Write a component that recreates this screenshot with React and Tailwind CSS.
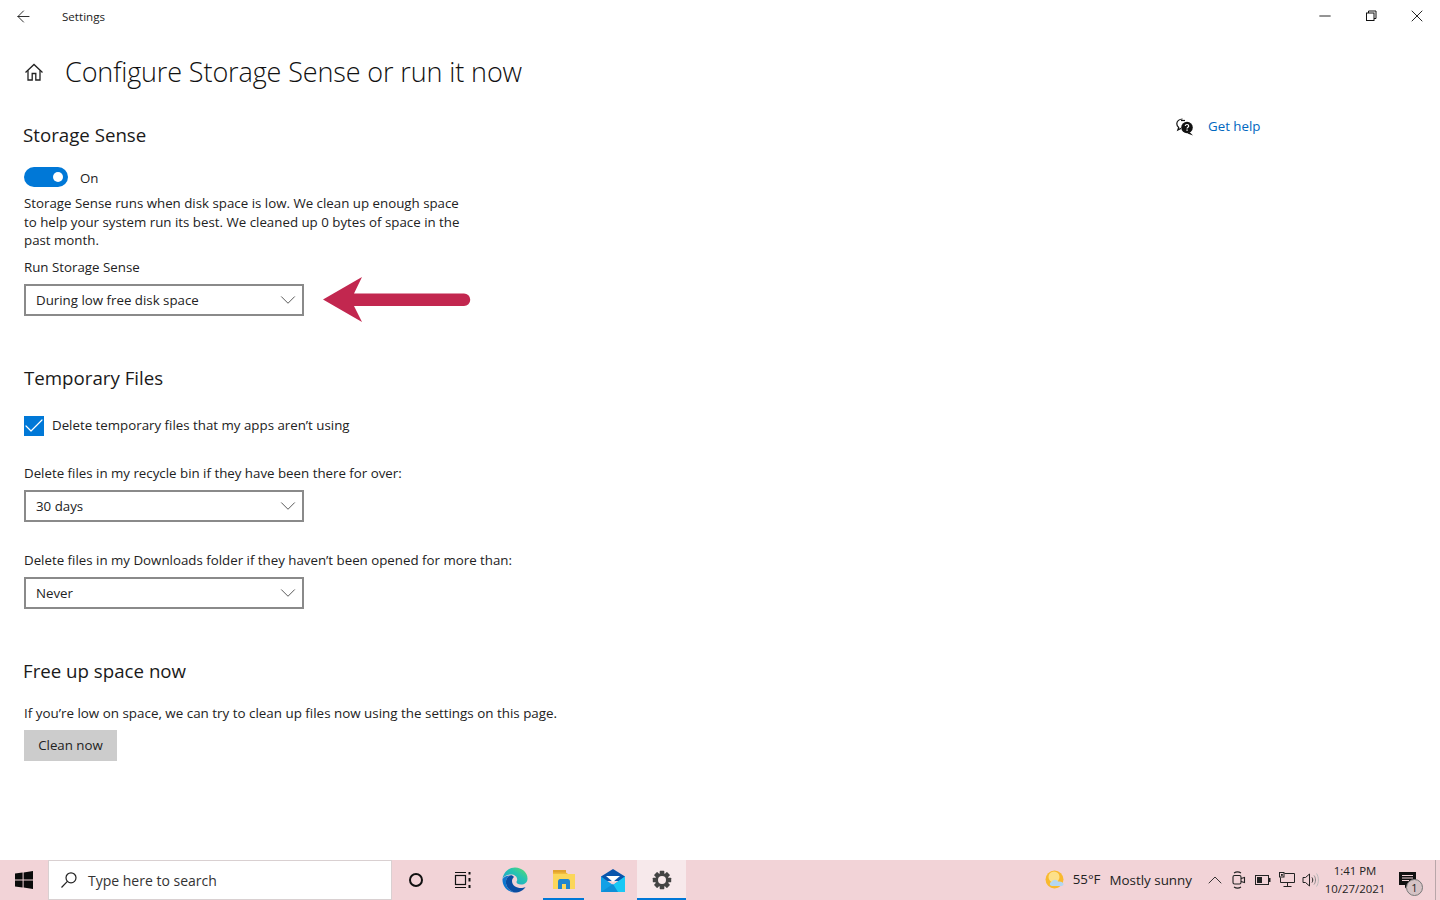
import React from 'react';
import { ArrowLeft, ChevronDown, ChevronUp, Check, Minus, X } from 'lucide-react';

const font = 'font-["Open_Sans","Noto_Sans",sans-serif]';
const body = 'text-[13.3px] leading-[18px] text-[#222]';

function Select({ value }) {
  return (
    <div className={`flex h-8 w-[280px] items-center justify-between border-2 border-[#8a8a8a] bg-white pl-[10px] pr-px ${body}`}>
      <span>{value}</span>
      <ChevronDown className="h-[26px] w-[26px] text-[#555]" strokeWidth={0.9} />
    </div>
  );
}

function SectionTitle({ children, className }) {
  return <h2 className={`text-[18.7px] leading-7 text-[#1a1a1a] ${className}`}>{children}</h2>;
}

function RestoreIcon() {
  return (
    <svg width="12" height="12" viewBox="0 0 12 12" fill="none" stroke="#111" strokeWidth="1">
      <rect x="1.5" y="3" width="7.5" height="7.5" />
      <path d="M3.5 3V1h7.5v7.5H9" />
    </svg>
  );
}

function HomeIcon() {
  return (
    <svg width="20" height="20" viewBox="0 0 20 20" fill="none" stroke="#222" strokeWidth="1.3">
      <path d="M1.5 10.5 10 2.5l8.5 8" />
      <path d="M4 8.5V18h4.2v-6.5h3.6V18H16V8.5" />
    </svg>
  );
}

function HelpIcon() {
  return (
    <svg width="18" height="18" viewBox="0 0 18 18">
      <path d="M6.5 1C3.3 1 .8 3.1.8 5.800c0 1.5.7 2.8 1.900 3.7L1.800 12l3.100-1.600" fill="none" stroke="#111" strokeWidth="1.2" />
      <path d="M5 2.5h4" stroke="#111" strokeWidth="1.2" />
      <circle cx="11" cy="9.5" r="5.8" fill="#111" />
      <path d="M13.5 14l3.5 3.5-5.5-2z" fill="#111" />
      <path d="M9.2 8c.2-1 .9-1.5 1.8-1.5 1 0 1.7.6 1.7 1.4 0 1.3-1.7 1.3-1.7 2.7" fill="none" stroke="#fff" strokeWidth="1.2" />
      <rect x="10.4" y="11.5" width="1.3" height="1.3" fill="#fff" />
    </svg>
  );
}

function RedArrow() {
  return (
    <svg width="148" height="46" viewBox="0 0 148 46" className="-my-[7px] ml-[19px] shrink-0">
      <path d="M0 22.5 39 0 31 16.5H141a6 6 0 0 1 0 12.5H31l8 16z" fill="#c2274f" />
    </svg>
  );
}

function WindowsLogo() {
  return (
    <svg width="18" height="18" viewBox="0 0 18 18" fill="#0a0a0a">
      <path d="M0 2.6 7.6 1.5v7H0zM8.6 1.4 18 0v8.5H8.6zM0 9.5h7.6v7L0 15.4zM8.6 9.5H18V18l-9.4-1.4z" />
    </svg>
  );
}

function SearchIcon() {
  return (
    <svg width="18" height="18" viewBox="0 0 18 18" fill="none" stroke="#222" strokeWidth="1.2">
      <circle cx="11" cy="6.8" r="5" />
      <path d="M7.4 10.4 1.5 16.5" />
    </svg>
  );
}

function TaskViewIcon() {
  return (
    <svg width="18" height="18" viewBox="0 0 18 18" fill="none" stroke="#111" strokeWidth="1.2">
      <path d="M1 1.5h11M1 16.5h11" />
      <rect x="1.5" y="4.5" width="10" height="9" />
      <path d="M15.5 1v2.5M15.5 7v3.5M15.5 14v3" strokeWidth="2" />
    </svg>
  );
}

function EdgeIcon() {
  return (
    <svg width="26" height="26" viewBox="0 0 26 26">
      <defs>
        <linearGradient id="edgeTop" x1="0" y1="1" x2="1" y2="0">
          <stop offset="0" stopColor="#1c9ad6" />
          <stop offset="0.6" stopColor="#27c4b0" />
          <stop offset="1" stopColor="#5fdc6a" />
        </linearGradient>
      </defs>
      <path d="M.5 12C1.5 5 7 .5 13 .5c7 0 12.5 5 12.5 11 0 4-3 6-6.5 6-3 0-4.5-1.3-4.5-2.5 0-.8.7-1 .7-2.5 0-3-3-5-6-5-4 0-7.5 2-8.7 4.5z" fill="url(#edgeTop)" />
      <path d="M.5 12c1.7-2.5 4.7-3.5 7.7-3.5-3 1.5-4.7 4.5-4.2 8 .5 4 4 7.5 8.5 9C5.500 25 .5 19.5.5 13z" fill="#0d76cf" />
      <path d="M8.2 8.5C5 10 3.5 13 4 16.5c.5 4 4 7.5 8.5 9 5 0 9-2 11-5.500-1.500.8-3 1-4.500 1-4.500 0-9-2.500-9-7 0-2 .9-3 2-4-1.200-1.300-2.500-2-3.800-1.500z" fill="#0a4da2" />
    </svg>
  );
}

function ExplorerIcon() {
  return (
    <svg width="22" height="20" viewBox="0 0 22 20">
      <path d="M0 0h13v4H0z" fill="#e2a32e" />
      <path d="M0 4h22v15H0z" fill="#fbd65a" />
      <path d="M0 2.5h13L15 4H0z" fill="#f1bb3a" />
      <path d="M5 19V11.5C5 10 6 9 7 9h8c1 0 2 1 2 2.5V19h-4v-5H9v5z" fill="#1f85cf" />
    </svg>
  );
}

function MailIcon() {
  return (
    <svg width="24" height="23" viewBox="0 0 24 23">
      <path d="M12 0 24 7.5V12H0V7.5z" fill="#0a55ac" />
      <path d="M5 7h14l-7 6z" fill="#fff" />
      <path d="M0 7.5 12 16 24 7.5V23H0z" fill="#12a0e6" />
      <path d="M24 7.5V23H14L12 16z" fill="#19c8f5" />
      <path d="M0 23 12 15l5 8z" fill="#0d8fd8" />
    </svg>
  );
}

function GearIcon() {
  return (
    <svg width="20" height="20" viewBox="0 0 20 20">
      <g fill="#444">
        <rect x="7.7" y="0.8" width="4.6" height="18.4" rx="0.6" />
        <rect x="7.7" y="0.8" width="4.6" height="18.4" rx="0.6" transform="rotate(45 10 10)" />
        <rect x="7.7" y="0.8" width="4.6" height="18.4" rx="0.6" transform="rotate(90 10 10)" />
        <rect x="7.7" y="0.8" width="4.6" height="18.4" rx="0.6" transform="rotate(135 10 10)" />
      </g>
      <circle cx="10" cy="10" r="6.8" fill="#444" />
      <circle cx="10" cy="10" r="4" fill="#f7e9eb" />
    </svg>
  );
}

function WeatherIcon() {
  return (
    <svg width="20" height="20" viewBox="0 0 20 20">
      <circle cx="9.5" cy="9.5" r="9" fill="#f9b92e" />
      <circle cx="9" cy="7" r="5.5" fill="#fde08a" />
      <path d="M7 16c-2.5 0-3-3.5-.5-4 .5-2.5 5-3.5 6.5-.5 3-.5 5.5 1 5.5 2.5 0 1.5-1 2-2.5 2z" fill="#b4d7f2" />
    </svg>
  );
}

function MeetIcon() {
  return (
    <svg width="14" height="18" viewBox="0 0 14 18" fill="none" stroke="#222" strokeWidth="1.1">
      <rect x="1" y="4.5" width="8" height="8.5" rx="1.5" />
      <path d="M9 7.5l3.5-1v5l-3.5-1" />
      <path d="M2 2c2-1.3 5-1.3 7 0M2 16c2 1.3 5 1.3 7 0" />
    </svg>
  );
}

function BatteryIcon() {
  return (
    <svg width="16" height="10" viewBox="0 0 16 10" fill="none">
      <rect x="0.5" y="0.5" width="13" height="9" stroke="#222" />
      <rect x="2" y="2" width="5" height="6" fill="#222" />
      <rect x="14" y="3" width="1.5" height="4" fill="#222" />
    </svg>
  );
}

function NetworkIcon() {
  return (
    <svg width="16" height="16" viewBox="0 0 16 16" fill="none" stroke="#222" strokeWidth="1">
      <path d="M5.5 1.5h10v9H1.5V5.5M8.5 10.5v3.5M4.5 14.5h8" />
      <rect x="0.5" y="0.5" width="4.5" height="4.5" />
      <rect x="2" y="2" width="1.8" height="1.8" fill="#222" stroke="none" />
    </svg>
  );
}

function VolumeIcon() {
  return (
    <svg width="18" height="16" viewBox="0 0 18 16" fill="none" stroke="#222" strokeWidth="1">
      <path d="M1 5.5h2.5L7.5 2v12l-4-3.5H1z" />
      <path d="M10 5.5c1 1.5 1 3.5 0 5" />
      <path d="M12 3.5c2 2.5 2 6.5 0 9" stroke="#888" />
      <path d="M14.5 1.5c2.5 3.5 2.5 9.5 0 13" stroke="#bbb" />
    </svg>
  );
}

function NotificationIcon() {
  return (
    <div className="relative ml-[6px] h-[30px] w-[32px]">
      <svg width="17" height="17" viewBox="0 0 17 17" className="absolute left-[6px] top-[7px]">
        <path d="M0 0h17v13H9l-3 3.5V13H0z" fill="#111" />
        <path d="M3 3.5h11M3 6h11M3 8.5h7" stroke="#f2d3d7" strokeWidth="1" />
      </svg>
      <span className="absolute left-[13px] top-[14px] flex h-[17px] w-[17px] items-center justify-center rounded-full border border-[#777] bg-[#d5c3c5] text-[11px] leading-none text-[#222]">1</span>
    </div>
  );
}

function TaskbarSlot({ children, active, running, className }) {
  return (
    <div className={`relative flex h-10 items-center justify-center ${active ? 'bg-[#f7e9eb]' : ''} ${className}`}>
      {children}
      {(active || running) && <span className={`absolute bottom-0 h-[2px] bg-[#0078d7] ${active ? 'inset-x-0' : 'inset-x-[4px]'}`} />}
    </div>
  );
}

export default function App() {
  return (
    <div className={`flex h-[900px] w-[1440px] flex-col overflow-hidden bg-white text-[#1a1a1a] ${font}`}>
      {/* title bar */}
      <header className="flex h-8 shrink-0 items-center">
        <ArrowLeft className="ml-[14px] h-[19px] w-[19px] text-[#111]" strokeWidth={1.1} />
        <span className="ml-[29px] mt-[2px] text-[11.6px] text-[#222]">Settings</span>
        <div className="ml-auto flex items-center">
          <div className="flex h-8 w-[46px] items-center justify-center"><Minus className="h-[18px] w-[18px] text-[#111]" strokeWidth={1.2} /></div>
          <div className="flex h-8 w-[46px] items-center justify-center"><RestoreIcon /></div>
          <div className="flex h-8 w-[46px] items-center justify-center"><X className="h-5 w-5 text-[#111]" strokeWidth={1.1} /></div>
        </div>
      </header>

      <div className="flex min-h-0 flex-1">
        <main className="flex-1 pl-6">
          <div className="mt-5 flex h-10 items-center">
            <HomeIcon />
            <h1 className="ml-[21px] text-[27px] font-light leading-10 tracking-[-0.12px] text-[#111]">Configure Storage Sense or run it now</h1>
          </div>

          <SectionTitle className="mt-[29px] -ml-px">Storage Sense</SectionTitle>

          <div className="mt-[18px] flex h-5 items-center">
            <div className="flex h-5 w-11 items-center justify-end rounded-full bg-[#0078d7] pr-[5px]">
              <span className="h-[10px] w-[10px] rounded-full bg-white" />
            </div>
            <span className={`ml-3 mt-[2px] ${body}`}>On</span>
          </div>

          <p className="mt-[7px] w-[445px] text-[13.3px] leading-[18.6px] text-[#222]">
            Storage Sense runs when disk space is low. We clean up enough space to help your system run its best. We cleaned up 0 bytes of space in the past month.
          </p>

          <p className={`mt-[8px] ${body}`}>Run Storage Sense</p>
          <div className="mt-[8px] flex items-center">
            <Select value="During low free disk space" />
            <RedArrow />
          </div>

          <SectionTitle className="mt-[48px]">Temporary Files</SectionTitle>

          <div className="mt-[24px] flex items-center">
            <span className="flex h-5 w-5 shrink-0 items-center justify-center bg-[#0078d7]">
              <Check className="h-6 w-6 shrink-0 text-white" strokeWidth={1.2} />
            </span>
            <span className={`ml-2 -mt-[2px] ${body}`}>Delete temporary files that my apps aren’t using</span>
          </div>

          <p className={`mt-[28px] ${body}`}>Delete files in my recycle bin if they have been there for over:</p>
          <div className="mt-[8px]"><Select value="30 days" /></div>

          <p className={`mt-[29px] ${body}`}>Delete files in my Downloads folder if they haven’t been opened for more than:</p>
          <div className="mt-[8px]"><Select value="Never" /></div>

          <SectionTitle className="mt-[48px] -ml-px">Free up space now</SectionTitle>

          <p className="mt-[19px] text-[13.4px] leading-[18px] text-[#222]">If you’re low on space, we can try to clean up files now using the settings on this page.</p>
          <button className={`mt-[8px] flex h-[31px] w-[93px] items-center justify-center bg-[#cccccc] ${body}`}>Clean now</button>
        </main>

        <aside className="w-[264px] shrink-0 pt-[83px]">
          <div className="flex h-6 items-center">
            <HelpIcon />
            <span className="ml-[14px] text-[13.3px] text-[#0067c0]">Get help</span>
          </div>
        </aside>
      </div>

      {/* taskbar */}
      <footer className="flex h-10 shrink-0 items-center bg-[#f2d3d7] text-[#222]">
        <div className="flex h-10 w-12 items-center justify-center"><WindowsLogo /></div>
        <div className="flex h-10 w-[344px] items-center border border-[#d9d0d1] bg-white pl-[11px]">
          <SearchIcon />
          <span className="ml-[10px] text-[14px] text-[#333]">Type here to search</span>
        </div>
        <div className="flex h-10 w-[48px] items-center justify-center">
          <span className="h-[14px] w-[14px] rounded-full border-[2.5px] border-[#111]" />
        </div>
        <TaskbarSlot className="w-[46px]"><TaskViewIcon /></TaskbarSlot>
        <TaskbarSlot className="ml-[5px] w-[48px]"><EdgeIcon /></TaskbarSlot>
        <TaskbarSlot className="w-[49px]" running><ExplorerIcon /></TaskbarSlot>
        <TaskbarSlot className="w-[49px]"><MailIcon /></TaskbarSlot>
        <TaskbarSlot className="w-[49px]" active><GearIcon /></TaskbarSlot>

        <div className="ml-auto flex h-10 items-center">
          <WeatherIcon />
          <span className="ml-[8px] text-[13.3px]">55°F</span>
          <span className="ml-[9px] text-[13.4px]">Mostly sunny</span>
          <div className="ml-[11px] flex w-[24px] justify-center"><ChevronUp className="h-7 w-7" strokeWidth={0.9} /></div>
          <div className="flex w-[24px] justify-center"><MeetIcon /></div>
          <div className="flex w-[24px] justify-center"><BatteryIcon /></div>
          <div className="flex w-[24px] justify-center"><NetworkIcon /></div>
          <div className="flex w-[24px] justify-center"><VolumeIcon /></div>
          <div className="flex w-[64px] flex-col items-center text-[11.4px] leading-[18px]">
            <span>1:41 PM</span>
            <span>10/27/2021</span>
          </div>
          <NotificationIcon />
          <div className="ml-[10px] mr-[4px] h-10 w-px bg-[#b9a6a9]" />
        </div>
      </footer>
    </div>
  );
}
